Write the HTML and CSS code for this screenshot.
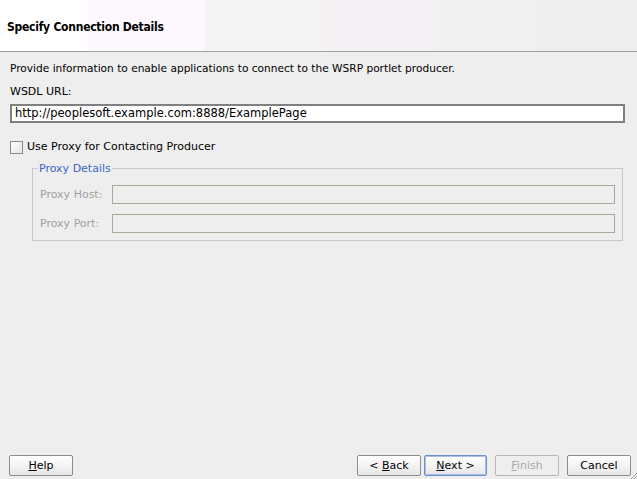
FILE: index.html
```html
<!DOCTYPE html>
<html>
<head>
<meta charset="utf-8">
<link rel="stylesheet" href="styles.css">
</head>
<body>
<div class="dialog">
  <div class="header">
    <h1 class="title">Specify Connection Details</h1>
  </div>
  <div class="content">
    <p class="intro">Provide information to enable applications to connect to the WSRP portlet producer.</p>
    <label class="field-label">WSDL URL:</label>
    <div class="input">http://peoplesoft.example.com:8888/ExamplePage</div>
    <div class="check-row">
      <span class="checkbox"></span>
      <span class="check-label">Use Proxy for Contacting Producer</span>
    </div>
    <fieldset class="group">
      <legend class="legend">Proxy Details</legend>
      <div class="row">
        <span class="row-label">Proxy Host:</span>
        <span class="dis-input"></span>
      </div>
      <div class="row">
        <span class="row-label">Proxy Port:</span>
        <span class="dis-input"></span>
      </div>
    </fieldset>
  </div>
  <div class="footer">
    <button class="btn"><u>H</u>elp</button>
    <div class="spacer"></div>
    <button class="btn">&lt; <u>B</u>ack</button>
    <button class="btn focus"><u>N</u>ext &gt;</button>
    <button class="btn disabled"><u>F</u>inish</button>
    <button class="btn last">Cancel</button>
  </div>
  <svg class="grip" width="8" height="8" viewBox="0 0 8 8"><path d="M8 2 L2 8 M8 5 L5 8" stroke="#a0a0a0" stroke-width="1"/></svg>
</div>
</body>
</html>
```
FILE: styles.css
```css
html, body {
  margin: 0;
  padding: 0;
}
body {
  width: 637px;
  height: 479px;
  overflow: hidden;
  background: #eeeeee;
  font-family: "DejaVu Sans", sans-serif;
  font-size: 11px;
  color: #000;
}
.dialog {
  position: relative;
  height: 479px;
  display: flex;
  flex-direction: column;
}
.header {
  height: 52px;
  box-sizing: border-box;
  border-bottom: 1px solid #a0a0a0;
  background: linear-gradient(to right,
    #ffffff 0, #ffffff 88px,
    #fdf8fd 88px, #fdf8fd 205px,
    #f4f4f4 205px, #f4f4f4 322px,
    #f5f1f4 322px, #f5f1f4 438px,
    #f1f1f1 438px, #f1f1f1 535px,
    #eeeeee 535px);
  display: flex;
  align-items: center;
  padding-left: 7px;
}
.title {
  margin: 0;
  font-family: "DejaVu Sans Condensed", "DejaVu Sans", sans-serif;
  font-weight: bold;
  font-size: 12px;
  letter-spacing: -0.25px;
  padding-top: 3px;
}
.content {
  padding: 9px 12px 0 10px;
  display: flex;
  flex-direction: column;
}
.intro {
  margin: 0;
  line-height: 14px;
  font-size: 10.6px;
}
.field-label {
  margin-top: 10px;
  line-height: 14px;
}
.input {
  margin-top: 5px;
  height: 19px;
  box-sizing: border-box;
  border: 2px solid #808080;
  background: #ffffff;
  padding: 0 0 0 3px;
  line-height: 15px;
  font-size: 11.5px;
}
.check-row {
  margin-top: 17px;
  display: flex;
  align-items: center;
  gap: 4px;
}
.checkbox {
  width: 13px;
  height: 13px;
  box-sizing: border-box;
  border: 1px solid #8a8a8a;
  background: linear-gradient(135deg, #ffffff, #e4e4e4);
}
.check-label {
  line-height: 14px;
}
.group {
  margin: 8px 2px 0 22px;
  border: 1px solid #c8c8c8;
  padding: 10px 7px 7px 7px;
  display: flex;
  flex-direction: column;
  gap: 10px;
}
.legend {
  color: #3c64c8;
  padding: 0 1px;
  margin-left: -2px;
  line-height: 13px;
}
.row {
  display: flex;
  align-items: center;
}
.row-label {
  width: 72px;
  color: #a0a0a0;
}
.dis-input {
  flex: 1;
  height: 19px;
  box-sizing: border-box;
  border: 1px solid #a8a898;
}
.footer {
  margin-top: auto;
  padding: 0 6px 3px 9px;
  display: flex;
  align-items: center;
}
.spacer {
  flex: 1;
}
.btn {
  width: 64px;
  height: 21px;
  box-sizing: border-box;
  border: 1px solid #8c8c8c;
  border-radius: 2px;
  background: linear-gradient(to bottom, #ffffff 0%, #f4f4f4 50%, #e6e6e6 100%);
  font-family: "DejaVu Sans", sans-serif;
  font-size: 11px;
  color: #000;
  padding: 0;
  margin-left: 3px;
}
.footer .btn:first-child {
  margin-left: 0;
}
.btn.focus {
  width: 63px;
  border-color: #6f8fc8;
  box-shadow: inset 0 0 0 1px #a8c0e8;
}
.btn.disabled {
  margin-left: 8px;
  color: #a8a8a8;
  border-color: #b8b8b0;
  background: #eeeeee;
}
.btn.last {
  margin-left: 8px;
}
.grip {
  position: absolute;
  right: 0;
  bottom: 0;
}
```
